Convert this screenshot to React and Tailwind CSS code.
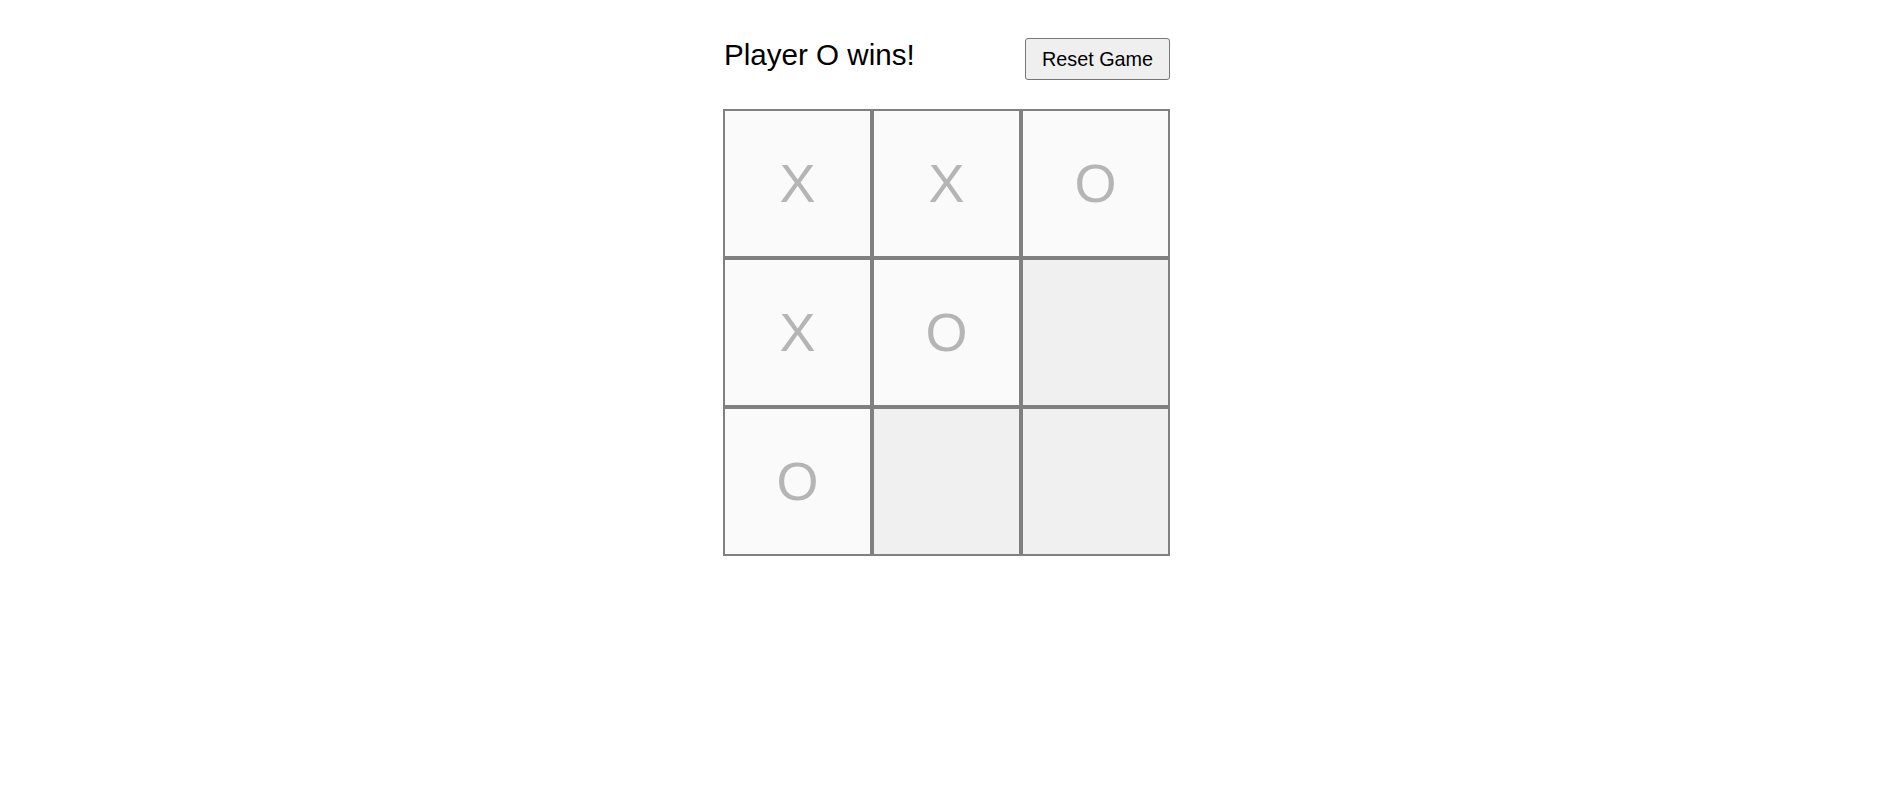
export default function App() {
  const board = ["X", "X", "O", "X", "O", "", "O", "", ""];
  return (
    <div className="min-h-screen bg-white" style={{ fontFamily: '"Liberation Sans", Arial, sans-serif' }}>
      <div className="flex justify-center pl-[2px] pt-[38px]">
        <div className="w-[447px]">
          <div className="flex items-start justify-between">
            <div className="text-[29.6px] leading-[33px] text-black pl-px">Player O wins!</div>
            <button className="h-[42px] w-[145px] rounded-[3px] border border-[#767676] bg-[#efefef] text-[19.8px] leading-[22px] text-black">
              Reset Game
            </button>
          </div>
          <div className="mt-[29px] grid grid-cols-[repeat(3,149px)] grid-rows-[repeat(3,149px)]">
            {board.map((v, i) => (
              <div
                key={i}
                className={
                  v
                    ? "flex items-center justify-center border-2 border-[#808080] bg-[#fafafa] text-[54px] text-[#b5b5b5]"
                    : "flex items-center justify-center border-2 border-[#808080] bg-[#f0f0f0] text-[54px] text-[#b5b5b5]"
                }
              >
                {v}
              </div>
            ))}
          </div>
        </div>
      </div>
    </div>
  );
}
